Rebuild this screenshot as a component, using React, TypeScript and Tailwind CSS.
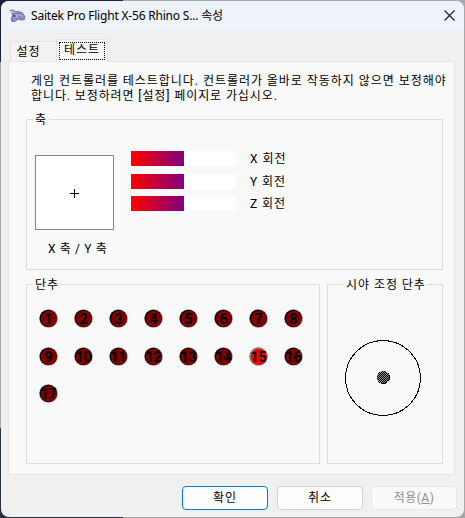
import type { ReactNode } from 'react'

const AXES = [
  { name: 'X 회전', value: 0.5, gap: 'mt-0' },
  { name: 'Y 회전', value: 0.5, gap: 'mt-2' },
  { name: 'Z 회전', value: 0.5, gap: 'mt-[7px]' },
]

const BUTTON_COUNT = 17
const PRESSED = 15

// ── Group box ────────────────────────────────────────────────────────────
interface GroupProps {
  title: string
  className: string
  legendClass: string
  children: ReactNode
}

function Group({ title, className, legendClass, children }: GroupProps) {
  return (
    <fieldset className={`min-w-0 border border-[#dcdcdc] ${className}`}>
      <legend className={`h-[15px] leading-[16px] whitespace-nowrap ${legendClass}`}>{title}</legend>
      {children}
    </fieldset>
  )
}

// ── Main ─────────────────────────────────────────────────────────────────
export default function App() {
  return (
    <div className="h-[518px] w-[465px] overflow-hidden bg-[#a9a9ab] bg-[linear-gradient(to_bottom,#1b2238_62px,transparent_62px,transparent_428px,#2b3040_428px)] bg-size-[123px_100%] bg-no-repeat pt-px pl-px font-[Roboto,'Noto_Sans_CJK_KR',sans-serif] text-[12px] tracking-[0.95px] text-black">
      <div className="flex h-[516px] w-[463px] flex-col overflow-hidden rounded-[8px] bg-[#f0f0f0]">
        <header className="flex h-[30px] shrink-0 items-center bg-[#eef3f9] pl-2">
          <IconJoystick />
          <h1 className="ml-[5px] flex-1 font-['Noto_Sans','Noto_Sans_CJK_KR',sans-serif] text-[12px] tracking-[-0.2px] whitespace-nowrap">
            Saitek Pro Flight X-56 Rhino S... 속성
          </h1>
          <button aria-label="닫기" className="mr-[9px] mb-[2px]"><IconClose /></button>
        </header>

        <nav className="flex h-[30px] shrink-0 items-end pl-[9px]">
          <button className="h-5 w-[46px] border border-r-0 border-b-0 border-[#e5e5e5] bg-[#f3f3f3] pr-[10px] text-center leading-[18px] whitespace-nowrap">
            설정
          </button>
          <button className="relative z-10 -mb-px h-[23px] w-[52px] border border-b-0 border-[#e5e5e5] bg-[#f9f9f9] p-[2px] pb-[2px]">
            <span className="block h-[18px] w-[46px] border border-dotted border-black text-center leading-[15px] whitespace-nowrap">
              테스트
            </span>
          </button>
        </nav>

        <main className="ml-[7px] h-[414px] w-[447px] shrink-0 border border-[#e5e5e5] bg-[#f9f9f9] pt-3 pl-[17px]">
          <p className="pl-[5px] leading-[15px] tracking-[0.96px] whitespace-nowrap">
            게임 컨트롤러를 테스트합니다. 컨트롤러가 올바로 작동하지 않으면 보정해야
            <br />
            <span className="tracking-[0.9px]">합니다. 보정하려면 [설정] 페이지로 가십시오.</span>
          </p>

          <Group title="축" className="mt-2 h-[158px] w-[417px]" legendClass="ml-[6px] w-[16px] pl-[2px]">
            <div className="flex pl-2">
              <div className="w-[79px] pt-7">
                <div className="flex h-[75px] items-center justify-center border border-[#828790] bg-white pt-px">
                  <svg width="9" height="9" viewBox="0 0 9 9" stroke="#000" shapeRendering="crispEdges">
                    <path d="M4.5 0v9M0 4.5h9" />
                  </svg>
                </div>
                <div className="mt-3 pl-[13px] leading-[15px] tracking-[0.65px] whitespace-nowrap">X 축 / Y 축</div>
              </div>
              <div className="ml-[17px] pt-6">
                {AXES.map(a => (
                  <div key={a.name} className={`flex h-[15px] items-center ${a.gap}`}>
                    <div className="h-[15px] w-[105px] bg-white">
                      <div
                        className="h-full bg-linear-to-r/srgb from-[#ff0000] to-[#800080]"
                        style={{ width: Math.ceil(105 * a.value) }}
                      />
                    </div>
                    <span className="ml-[14px] pt-[2px] leading-[15px] whitespace-nowrap">{a.name}</span>
                  </div>
                ))}
              </div>
            </div>
          </Group>

          <div className="mt-[7px] flex gap-[7px]">
            <Group title="단추" className="h-[187px] w-[294px]" legendClass="ml-[6px] w-[28px] pl-[2px]">
              <div className="grid grid-cols-[repeat(8,35px)] grid-rows-[38px_37px_19px] pt-[17px] pl-3">
                {Array.from({ length: BUTTON_COUNT }, (_, i) => (
                  <Lamp key={i} num={i + 1} lit={i + 1 === PRESSED} />
                ))}
              </div>
            </Group>
            <Group title="시야 조정 단추" className="h-[187px] w-[116px]" legendClass="ml-[15px] w-[84px] pl-[3px]">
              <div className="pt-12 pl-[17px]"><Pov /></div>
            </Group>
          </div>
        </main>

        <footer className="flex pt-[11px] pl-[181px] text-center leading-[22px]">
          <button className="h-6 w-[86px] rounded-[4px] border border-[#0078d4] bg-[#fdfdfd]">확인</button>
          <button className="ml-[9px] h-6 w-[86px] rounded-[4px] border border-[#d0d0d0] bg-[#fdfdfd]">취소</button>
          <button disabled className="ml-2 h-6 w-[86px] rounded-[4px] border border-[#e8e8e8] bg-[#f9f9f9] tracking-[0.5px] text-[#8e8e8e]">
            적용(<u>A</u>)
          </button>
        </footer>
      </div>
    </div>
  )
}

// ── Indicators ───────────────────────────────────────────────────────────
function Lamp({ num, lit }: { num: number; lit: boolean }) {
  return (
    <div className="relative flex h-[19px] w-[19px] items-center justify-center">
      <svg className="absolute inset-0" width="19" height="19" viewBox="0 0 19 19">
        <circle cx="9.5" cy="9.5" r="9.3" fill="#858585" />
        <circle cx="9.3" cy="9.3" r="8.6" fill={lit ? '#858585' : '#000'} />
        <circle cx="9.9" cy="9.9" r="8.1" fill={lit ? '#ff0000' : '#800000'} />
      </svg>
      <span className="relative top-px font-[Roboto,sans-serif] text-[14px] leading-[19px] font-bold tracking-normal">
        {num}
      </span>
    </div>
  )
}

function Pov() {
  return (
    <svg width="77" height="77" viewBox="0 0 77 77" shapeRendering="crispEdges">
      <defs>
        <pattern id="dither" width="2" height="2" patternUnits="userSpaceOnUse">
          <path fill="#8c8c8c" d="M0 0h2v2H0z" />
          <path fill="#000" d="M0 0h1v1H0zM1 1h1v1H1z" />
        </pattern>
      </defs>
      <circle cx="38" cy="38" r="37.5" fill="none" stroke="#000" />
      <circle cx="38.5" cy="37.5" r="6.5" fill="#000" />
      <circle cx="38.2" cy="37.2" r="6.3" fill="url(#dither)" />
    </svg>
  )
}

// ── Icons ────────────────────────────────────────────────────────────────
function IconJoystick() {
  return (
    <svg width="17" height="16" viewBox="0 0 17 16">
      <path d="M1 2.5h3l2 1.2h5" fill="none" stroke="#858585" strokeWidth="1.5" />
      <path d="M2.5 4.5 5 6.5" fill="none" stroke="#777" strokeWidth="1.5" />
      <path d="M4 5.5 13 4.5l2.8 4-.3 3-3 .5-3-1-4 2.5H3l-.8-2Z" fill="#8a8ad6" stroke="#66668e" strokeWidth=".9" />
      <path d="m4.800 6.500 8-.9 1.800 2.400-3 1-6 1Z" fill="#aaaaf0" />
      <path d="M4.500 7h2v2h-2z" fill="#4545a5" />
      <path d="M8 6h2v1.500H8z" fill="#2fd3e8" />
      <path d="M11 5.500h2V7h-2z" fill="#f06a50" />
      <path d="M9.500 8h2v1.500h-2z" fill="#e44" />
      <path d="M12 7.500h2V9h-2z" fill="#5cd45c" />
    </svg>
  )
}

function IconClose() {
  return (
    <svg width="11" height="11" viewBox="0 0 11 11" stroke="#1a1a1a" strokeWidth="1.1">
      <path d="m.5.5 10 10M10.5.5l-10 10" />
    </svg>
  )
}
